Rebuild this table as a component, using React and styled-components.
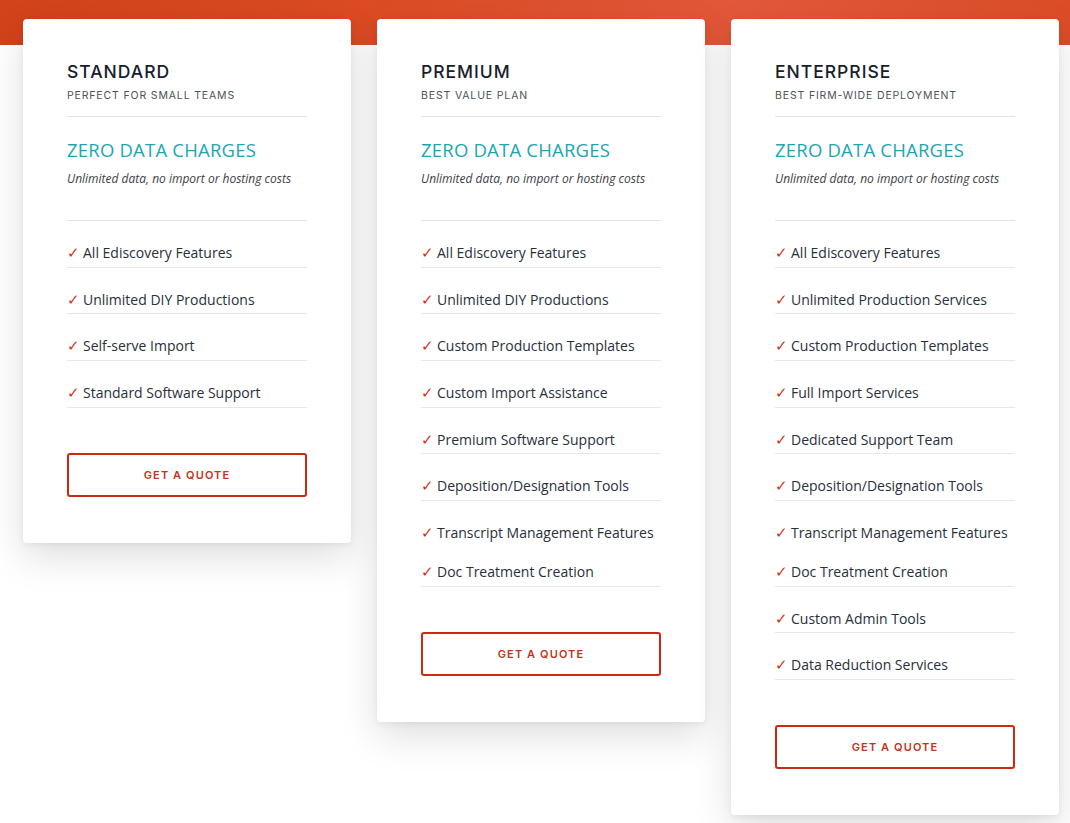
import React from "react";
import styled, { createGlobalStyle } from "styled-components";

const plans = [
  {
    name: "STANDARD",
    tagline: "PERFECT FOR SMALL TEAMS",
    features: [
      "All Ediscovery Features",
      "Unlimited DIY Productions",
      "Self-serve Import",
      "Standard Software Support",
    ],
  },
  {
    name: "PREMIUM",
    tagline: "BEST VALUE PLAN",
    features: [
      "All Ediscovery Features",
      "Unlimited DIY Productions",
      "Custom Production Templates",
      "Custom Import Assistance",
      "Premium Software Support",
      "Deposition/Designation Tools",
      { text: "Transcript Management Features", plain: true },
      "Doc Treatment Creation",
    ],
  },
  {
    name: "ENTERPRISE",
    tagline: "BEST FIRM-WIDE DEPLOYMENT",
    features: [
      "All Ediscovery Features",
      "Unlimited Production Services",
      "Custom Production Templates",
      "Full Import Services",
      "Dedicated Support Team",
      "Deposition/Designation Tools",
      { text: "Transcript Management Features", plain: true },
      "Doc Treatment Creation",
      "Custom Admin Tools",
      "Data Reduction Services",
    ],
  },
];

const GlobalStyle = createGlobalStyle`
  * { box-sizing: border-box; }
  html, body {
    margin: 0;
    padding: 0;
    background: #ffffff;
  }
`;

// Orange band sits behind the top of the cards
const Page = styled.div`
  min-height: 823px;
  padding: 19px 0 40px 23px;
  background:
    linear-gradient(90deg, #d2421b 0%, #dc4b24 35%, #e2583a 70%, #dc4d27 100%) top / 100% 45px no-repeat,
    #ffffff;
  font-family: "Open Sans", "Liberation Sans", sans-serif;
`;

const Row = styled.div`
  display: flex;
  align-items: flex-start;
  gap: 26px;
`;

const Card = styled.div`
  width: 328px;
  background: #ffffff;
  border-radius: 4px;
  padding: 43px 44px 46px 44px;
  box-shadow: 0 14px 38px rgba(0, 0, 0, 0.13), 0 2px 6px rgba(0, 0, 0, 0.06);
`;

const Header = styled.div`
  padding-bottom: 13px;
  border-bottom: 1px solid #e2e4e6;
`;

const Title = styled.h3`
  margin: 0;
  font-family: "Inter", "Liberation Sans", sans-serif;
  font-size: 17.5px;
  line-height: 20px;
  font-weight: 500;
  letter-spacing: 1px;
  color: #16202c;
`;

const Tagline = styled.div`
  margin-top: 7px;
  font-family: "Inter", "Liberation Sans", sans-serif;
  font-size: 10.5px;
  line-height: 14px;
  letter-spacing: 0.85px;
  color: #4e5257;
`;

const Offer = styled.div`
  padding-bottom: 33px;
  border-bottom: 1px solid #e2e4e6;
`;

const OfferTitle = styled.div`
  margin-top: 21px;
  font-size: 18.5px;
  line-height: 24px;
  letter-spacing: 0.2px;
  color: #1ba6b3;
`;

const OfferNote = styled.div`
  margin-top: 9px;
  font-size: 12px;
  line-height: 16px;
  font-style: italic;
  color: #3c4046;
`;

const FeatureList = styled.ul`
  list-style: none;
  margin: 0;
  padding: 0;
`;

const Feature = styled.li`
  display: flex;
  align-items: center;
  gap: 3px;
  padding: ${(p) => (p.$plain ? "25px 0 0" : "21px 0 2.67px")};
  line-height: ${(p) => (p.$plain ? "14px" : "22px")};
  font-size: 14px;
  color: #27303c;
  border-bottom: ${(p) => (p.$plain ? "none" : "1px solid #e6e8ea")};
`;

const Check = styled.span`
  color: #d3321a;
  font-size: 15px;
  font-family: "DejaVu Sans", sans-serif;
  font-weight: 300;
`;

const QuoteButton = styled.button`
  display: block;
  width: 100%;
  height: 44px;
  margin-top: 45px;
  background: #ffffff;
  border: 2px solid #cc2a10;
  border-radius: 3px;
  color: #c4331b;
  font-family: "Inter", "Liberation Sans", sans-serif;
  font-size: 11px;
  font-weight: 600;
  letter-spacing: 1.1px;
  cursor: pointer;
`;

export default function App() {
  return (
    <Page>
      <GlobalStyle />
      <Row>
        {plans.map((plan) => (
          <Card key={plan.name}>
            <Header>
              <Title>{plan.name}</Title>
              <Tagline>{plan.tagline}</Tagline>
            </Header>
            <Offer>
              <OfferTitle>ZERO DATA CHARGES</OfferTitle>
              <OfferNote>Unlimited data, no import or hosting costs</OfferNote>
            </Offer>
            <FeatureList>
              {plan.features.map((f, i) => {
                const item = typeof f === "string" ? { text: f } : f;
                return (
                  <Feature key={i} $plain={item.plain}>
                    <Check>✓</Check>
                    {item.text}
                  </Feature>
                );
              })}
            </FeatureList>
            <QuoteButton>GET A QUOTE</QuoteButton>
          </Card>
        ))}
      </Row>
    </Page>
  );
}
